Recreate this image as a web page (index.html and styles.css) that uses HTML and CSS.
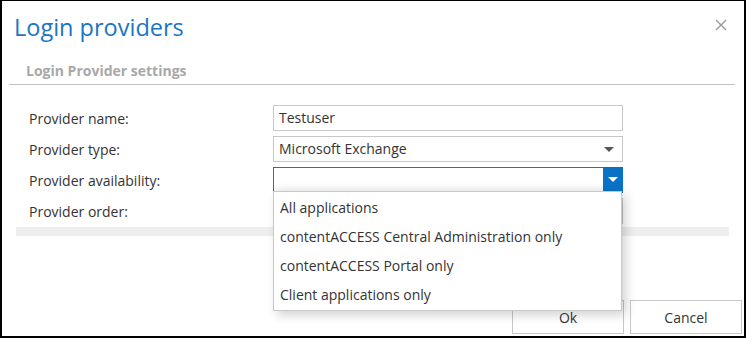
FILE: index.html
```html
<!DOCTYPE html>
<html lang="en">
  <head>
    <meta charset="UTF-8" />
    <title>Login providers</title>
    <link rel="stylesheet" href="styles.css">
  </head>
  <body>
    <div class="dialog">
      <div class="dialog__header">
        <h1 class="dialog__title">Login providers</h1>
        <svg class="dialog__close" width="12" height="12" viewBox="0 0 12 12">
          <path d="M1 1 L11 11 M11 1 L1 11" stroke="#9a9a9a" stroke-width="1.4" fill="none" />
        </svg>
      </div>
      <div class="section">
        <div class="section__title">Login Provider settings</div>
      </div>
      <div class="form">
        <div class="form__row">
          <label class="form__label">Provider name:</label>
          <div class="field">Testuser</div>
        </div>
        <div class="form__row">
          <label class="form__label">Provider type:</label>
          <div class="field field--select">
            Microsoft Exchange
            <span class="field__arrow"></span>
          </div>
        </div>
        <div class="form__row">
          <label class="form__label">Provider availability:</label>
          <div class="field field--select field--open">
            <span class="field__button"><span class="field__arrow field__arrow--white"></span></span>
            <ul class="dropdown">
              <li>All applications</li>
              <li>contentACCESS Central Administration only</li>
              <li>contentACCESS Portal only</li>
              <li>Client applications only</li>
            </ul>
          </div>
        </div>
        <div class="form__row">
          <label class="form__label">Provider order:</label>
          <div class="field"></div>
        </div>
      </div>
      <div class="bar"></div>
      <div class="dialog__footer">
        <button class="btn">Ok</button>
        <button class="btn">Cancel</button>
      </div>
    </div>
  </body>
</html>
```

FILE: styles.css
```css
* {
  margin: 0;
  padding: 0;
  box-sizing: border-box;
}

body {
  background: #fff;
  font-family: "Open Sans", "Noto Sans", sans-serif;
  color: #333;
}

.dialog {
  width: 746px;
  height: 338px;
  border-style: solid;
  border-color: #000;
  border-width: 1px 2px 2px 2px;
  box-shadow: 0 1px 0 #c8c8c8;
  display: flex;
  flex-direction: column;
}

.dialog__header {
  display: flex;
  justify-content: space-between;
  align-items: flex-start;
  padding: 9px 17px 0 12px;
  height: 56px;
}

.dialog__title {
  font-size: 23.5px;
  font-weight: normal;
  line-height: 34px;
  color: #1a75c4;
}

.dialog__close {
  margin-top: 9px;
}

.section {
  padding: 0 9px 0 7px;
}

.section__title {
  font-size: 14px;
  font-weight: bold;
  color: #a8a8a8;
  padding: 3px 0 3px 17px;
  line-height: 21px;
  border-bottom: 1px solid #c2c2c2;
}

.form {
  padding: 20px 0 0 27px;
  display: flex;
  flex-direction: column;
  gap: 5px;
}

.form__row {
  display: flex;
  align-items: center;
  height: 26px;
}

.form__label {
  width: 244px;
  font-size: 14px;
}

.field {
  position: relative;
  width: 350px;
  height: 26px;
  border: 1px solid #c8c8c8;
  font-size: 14px;
  line-height: 24px;
  padding-left: 5px;
  background: #fff;
}

.field__arrow {
  position: absolute;
  right: 8px;
  top: 10px;
  border-left: 5px solid transparent;
  border-right: 5px solid transparent;
  border-top: 5px solid #555;
}

.field--open {
  border-color: #1a73c6;
  border-bottom-color: #d8d8d8;
  background: linear-gradient(#fff 60%, #f2f2f2);
}

.field__button {
  position: absolute;
  right: -1px;
  top: -1px;
  width: 20px;
  height: 26px;
  background: #0a72c6;
}

.field__arrow--white {
  right: 5px;
  border-top-color: #fff;
}

.dropdown {
  position: absolute;
  left: -1px;
  top: 23px;
  width: 349px;
  list-style: none;
  background: #fff;
  border: 1px solid #c8c8c8;
  box-shadow: 4px 4px 10px rgba(0, 0, 0, 0.18);
  padding: 1px 0 1px;
  z-index: 5;
}

.dropdown li {
  font-size: 14px;
  line-height: 29px;
  padding-left: 6px;
}

.bar {
  margin: 3px 15px 0 14px;
  height: 9px;
  background: #eeeeee;
}

.dialog__footer {
  margin-top: auto;
  display: flex;
  justify-content: flex-end;
  gap: 6px;
  padding: 0 2px 2px 0;
}

.btn {
  width: 112px;
  height: 34px;
  background: #fff;
  border: 1px solid #c8c8c8;
  font-family: inherit;
  font-size: 14px;
  color: #333;
}
```
